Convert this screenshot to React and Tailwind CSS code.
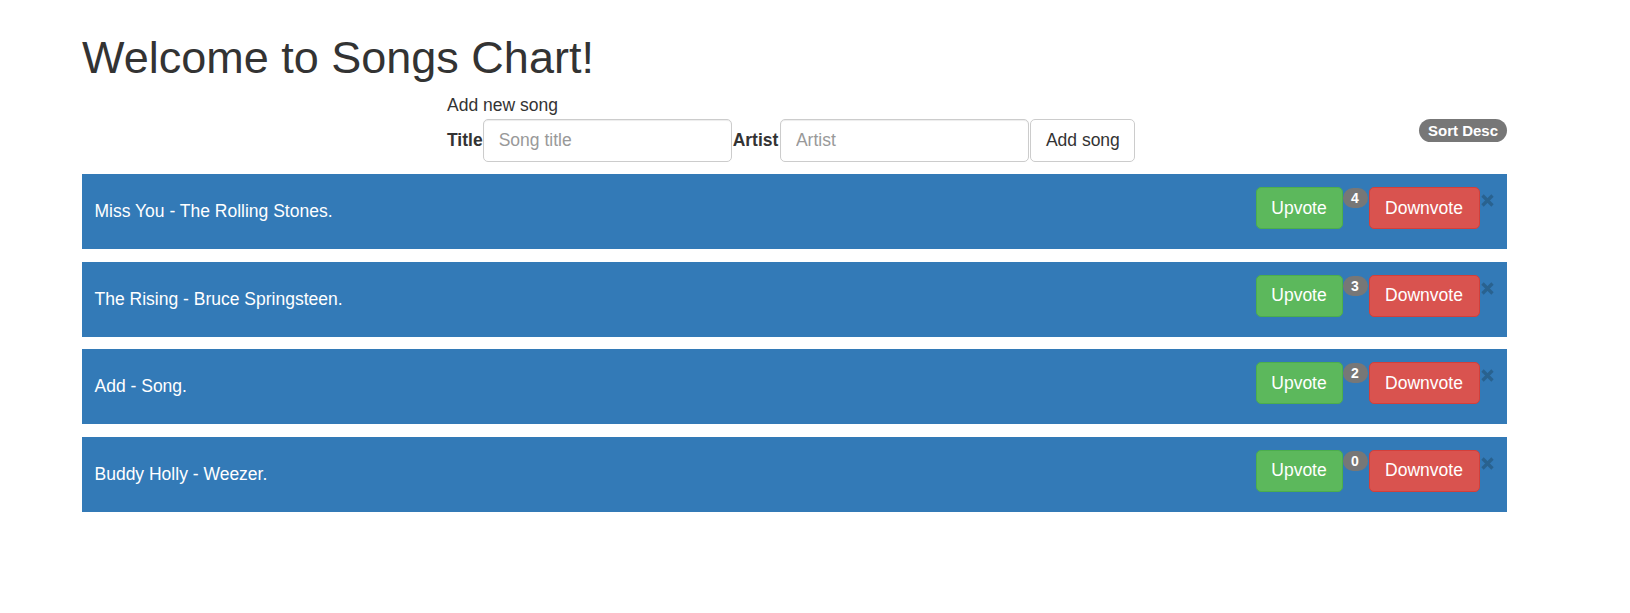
import React from 'react';

const songs = [
  { title: 'Miss You', artist: 'The Rolling Stones', votes: 4 },
  { title: 'The Rising', artist: 'Bruce Springsteen', votes: 3 },
  { title: 'Add', artist: 'Song', votes: 2 },
  { title: 'Buddy Holly', artist: 'Weezer', votes: 0 },
];

function CloseIcon() {
  return (
    <svg width="13" height="13" viewBox="0 0 13 13" className="mt-[7px]">
      <path d="M1.5 1.5 L11.5 11.5 M11.5 1.5 L1.5 11.5" stroke="#29628f" strokeWidth="3.2" strokeLinecap="butt" />
    </svg>
  );
}

function SongRow({ song }) {
  return (
    <div className="h-[75px] bg-[#337ab7] flex pl-[12.5px] pr-[13.5px]">
      <div className="flex-1 flex items-center text-white text-[17.5px]">
        {song.title} - {song.artist}.
      </div>
      <div className="flex items-start pt-[13px]">
        <button className="w-[87px] h-[42px] text-[17.5px] text-white bg-[#5cb85c] border border-[#4cae4c] rounded-[5px]">
          Upvote
        </button>
        <span className="mt-[1px] w-[25px] h-[20px] rounded-full bg-[#777] text-white text-[14px] font-bold flex items-center justify-center leading-none">
          {song.votes}
        </span>
        <button className="ml-[1px] w-[111px] h-[42px] text-[17.5px] text-white bg-[#d9534f] border border-[#d43f3a] rounded-[5px]">
          Downvote
        </button>
        <button className="ml-[1px] flex items-start" aria-label="Remove">
          <CloseIcon />
        </button>
      </div>
    </div>
  );
}

export default function App() {
  return (
    <div className="min-h-[613px] bg-white text-[#333] font-['Liberation_Sans',Arial,sans-serif]">
      <div className="ml-[82px] w-[1425px] pt-[33px]">
        <h1 className="text-[45px] leading-[1.1] font-normal">Welcome to Songs Chart!</h1>

        <div className="flex items-start mt-[10.5px]">
          <div className="ml-[365px]">
            <div className="text-[17.5px] leading-[25px] mb-[1px]">Add new song</div>
            <div className="flex items-center">
              <label className="text-[17.5px] font-bold">Title</label>
              <input
                type="text"
                placeholder="Song title"
                className="w-[249px] h-[42.5px] px-[15px] text-[17.5px] border border-[#ccc] rounded-[5px] placeholder:text-[#999] shadow-[inset_0_1px_1px_rgba(0,0,0,0.075)]"
              />
              <label className="ml-[1px] text-[17.5px] font-bold">Artist</label>
              <input
                type="text"
                placeholder="Artist"
                className="ml-[1.5px] w-[249px] h-[42.5px] px-[15px] text-[17.5px] border border-[#ccc] rounded-[5px] placeholder:text-[#999] shadow-[inset_0_1px_1px_rgba(0,0,0,0.075)]"
              />
              <button className="ml-[1.5px] w-[105px] h-[42.5px] text-[17.5px] text-[#333] bg-white border border-[#ccc] rounded-[5px]">
                Add song
              </button>
            </div>
          </div>
          <span className="ml-auto mt-[26px] h-[22.5px] px-[9px] rounded-full bg-[#777] text-white text-[15px] font-bold leading-none flex items-center">
            Sort Desc
          </span>
        </div>

        <div className="flex flex-col gap-[12.5px] mt-[12.5px]">
          {songs.map((s) => (
            <SongRow key={s.title} song={s} />
          ))}
        </div>
      </div>
    </div>
  );
}
